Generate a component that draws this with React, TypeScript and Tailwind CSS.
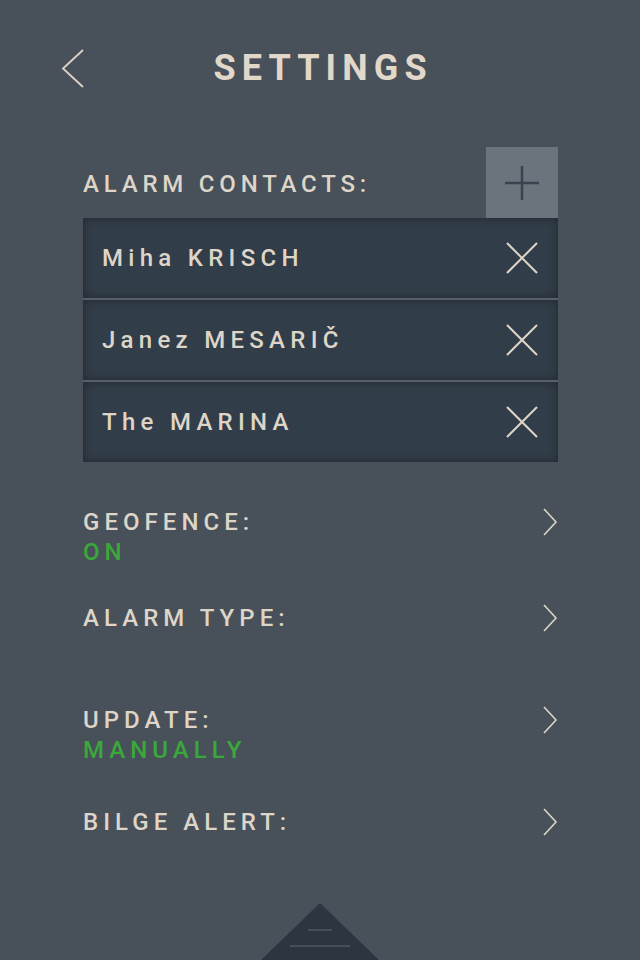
import React from 'react';

const contacts = ['Miha KRISCH', 'Janez MESARIČ', 'The MARINA'];

const settings = [
  { label: 'GEOFENCE:', value: 'ON', h: 'h-[96px]' },
  { label: 'ALARM TYPE:', value: '', h: 'h-[102px]' },
  { label: 'UPDATE:', value: 'MANUALLY', h: 'h-[102px]' },
  { label: 'BILGE ALERT:', value: '', h: 'h-[102px]' },
];

function ChevronRight() {
  return (
    <svg width="16" height="28" viewBox="0 0 16 28" fill="none">
      <path d="M2 1 L14 14 L2 27" stroke="#ddd5c8" strokeWidth="1.6" />
    </svg>
  );
}

function CloseIcon() {
  return (
    <svg width="32" height="32" viewBox="0 0 32 32" fill="none">
      <path d="M1 1 L31 31 M31 1 L1 31" stroke="#ddd5c8" strokeWidth="2" />
    </svg>
  );
}

export default function App() {
  return (
    <div
      className="w-[640px] h-[960px] bg-[#48505a] overflow-hidden relative text-[#ddd5c8]"
      style={{ fontFamily: 'Roboto, "Liberation Sans", sans-serif' }}
    >
      {/* header */}
      <div className="relative h-[147px]">
        <div className="absolute left-[60px] top-[49px]">
          <svg width="24" height="40" viewBox="0 0 24 40" fill="none">
            <path d="M23 1 L3 19.5 L23 38" stroke="#ddd5c8" strokeWidth="1.8" />
          </svg>
        </div>
        <h1 className="pt-[47px] text-center text-[36px] leading-[42px] font-bold tracking-[0.17em] pl-[0.17em] text-[#e2d8c9]">
          SETTINGS
        </h1>
      </div>

      <div className="pl-[83px] pr-[82px]">
        {/* alarm contacts */}
        <div className="flex items-center justify-between h-[71px]">
          <span className="text-[24px] leading-[28px] font-medium tracking-[0.2em] mt-[2px]">ALARM CONTACTS:</span>
          <button className="w-[72px] h-[71px] bg-[#6b737d] flex items-center justify-center">
            <svg width="36" height="36" viewBox="0 0 36 36" fill="none">
              <path d="M18 1 V35 M1 18 H35" stroke="#3a434d" strokeWidth="2.5" />
            </svg>
          </button>
        </div>
        <div className="flex flex-col gap-[2px] bg-[#56606b]">
          {contacts.map((c) => (
            <div
              key={c}
              className="h-[80px] bg-[#313d48] flex items-center justify-between pl-[19px] pr-[20px] shadow-[inset_0_0_10px_rgba(0,0,0,0.35)]"
            >
              <span className="text-[24px] leading-[28px] font-medium tracking-[0.22em]">{c}</span>
              <CloseIcon />
            </div>
          ))}
        </div>

        {/* settings list */}
        <div className="mt-[45px]">
          {settings.map((s) => (
            <div key={s.label} className={s.h}>
              <div className="flex items-center justify-between">
                <span className="text-[24px] leading-[30px] font-medium tracking-[0.21em]">{s.label}</span>
                <ChevronRight />
              </div>
              {s.value && (
                <div className="text-[24px] leading-[30px] font-medium tracking-[0.21em] text-[#3aa83a]">{s.value}</div>
              )}
            </div>
          ))}
        </div>
      </div>

      {/* bottom pull tab */}
      <div className="absolute left-1/2 -translate-x-1/2 bottom-0">
        <svg width="118" height="57" viewBox="0 0 118 57" fill="none">
          <path d="M59 0 L118 57 L0 57 Z" fill="#2c3641" />
          <path d="M47 27 H71" stroke="#4f5964" strokeWidth="1.5" />
          <path d="M29 43 H89" stroke="#4f5964" strokeWidth="1.5" />
        </svg>
      </div>
    </div>
  );
}
